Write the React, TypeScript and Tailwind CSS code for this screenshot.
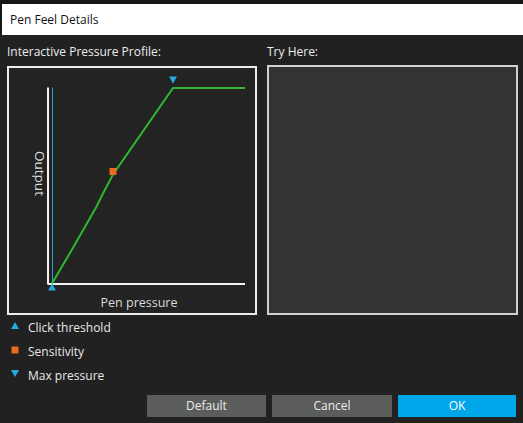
import React from "react";

const font = { fontFamily: '"Open Sans", "Noto Sans", "Liberation Sans", sans-serif' };

const PressureGraph: React.FC = () => (
  <svg className="block w-full h-full" viewBox="9 69 246 244">
    {/* axes */}
    <line x1="48" y1="88" x2="48" y2="285" stroke="#f2f2f2" strokeWidth="2" />
    <line x1="48" y1="284.5" x2="245" y2="284.5" stroke="#f2f2f2" strokeWidth="2" />
    <line x1="52.5" y1="88" x2="52.5" y2="284" stroke="#2a9fd0" strokeWidth="1" />
    {/* curve */}
    <polyline
      points="52,284 72,250 96,208 103,194 113,175 173,88.5 245,88.5"
      fill="none"
      stroke="#2eb82e"
      strokeWidth="2"
    />
    <rect x="109.5" y="168.5" width="7" height="7" fill="#ee6a1e" />
    <polygon points="52,284 48,291 56,291" fill="#27a9e1" />
    <polygon points="169,77 177,77 173,84" fill="#27a9e1" />
    <text
      x="39"
      y="174"
      fill="#dcdcdc"
      fontSize="13.5"
      textAnchor="middle"
      dominantBaseline="middle"
      transform="rotate(90 39 174)"
      style={font}
    >
      Output
    </text>
    <text x="139" y="307" fill="#dcdcdc" fontSize="12.5" textAnchor="middle" style={font}>
      Pen pressure
    </text>
  </svg>
);

const Legend: React.FC<{ kind: "up" | "square" | "down"; label: string }> = ({ kind, label }) => (
  <div className="flex items-center h-[24px]">
    <svg width="10" height="10" className="ml-[10px] mr-[8px] -mt-[5px]">
      {kind === "up" && <polygon points="5,1 1,8 9,8" fill="#27a9e1" />}
      {kind === "square" && <rect x="1.5" y="1.5" width="7" height="7" fill="#ee6a1e" />}
      {kind === "down" && <polygon points="1,1 9,1 5,8" fill="#27a9e1" />}
    </svg>
    <span className="text-[12px] text-[#e8e8e8]">{label}</span>
  </div>
);

export default function App() {
  return (
    <div className="w-[523px] h-[423px] bg-[#161616] pt-[4px] overflow-hidden" style={font}>
      <div className="ml-[2px] h-[31px] bg-white flex items-center px-[8px] text-[12px] text-[#111]">
        Pen Feel Details
      </div>
      <div className="h-[388px] bg-[#212121] flex flex-col">
        <div className="flex gap-[10px] px-[7px] pt-[8px]">
          <div className="w-[250px] flex flex-col">
            <div className="h-[23px] text-[12px] text-[#ececec] leading-[18px]">
              Interactive Pressure Profile:
            </div>
            <div className="w-[250px] h-[249px] border-2 border-[#ededed] bg-[#232323]">
              <PressureGraph />
            </div>
          </div>
          <div className="w-[250px] flex flex-col">
            <div className="h-[22px] text-[12px] text-[#ececec] leading-[18px]">Try Here:</div>
            <div className="w-[251px] h-[250px] border-2 border-[#d0d0d0] bg-[#333333]" />
          </div>
        </div>
        <div className="flex flex-col pt-[1px]">
          <Legend kind="up" label="Click threshold" />
          <Legend kind="square" label="Sensitivity" />
          <Legend kind="down" label="Max pressure" />
        </div>
        <div className="flex justify-end gap-[6px] pr-[7px] mt-auto mb-[6px]">
          <button className="w-[119px] h-[22px] bg-[#5b5d5c] text-[12px] text-[#ececec]">Default</button>
          <button className="w-[120px] h-[22px] bg-[#5b5d5c] text-[12px] text-[#ececec]">Cancel</button>
          <button className="w-[118px] h-[22px] bg-[#00a6ea] text-[12px] text-white">OK</button>
        </div>
      </div>
    </div>
  );
}
